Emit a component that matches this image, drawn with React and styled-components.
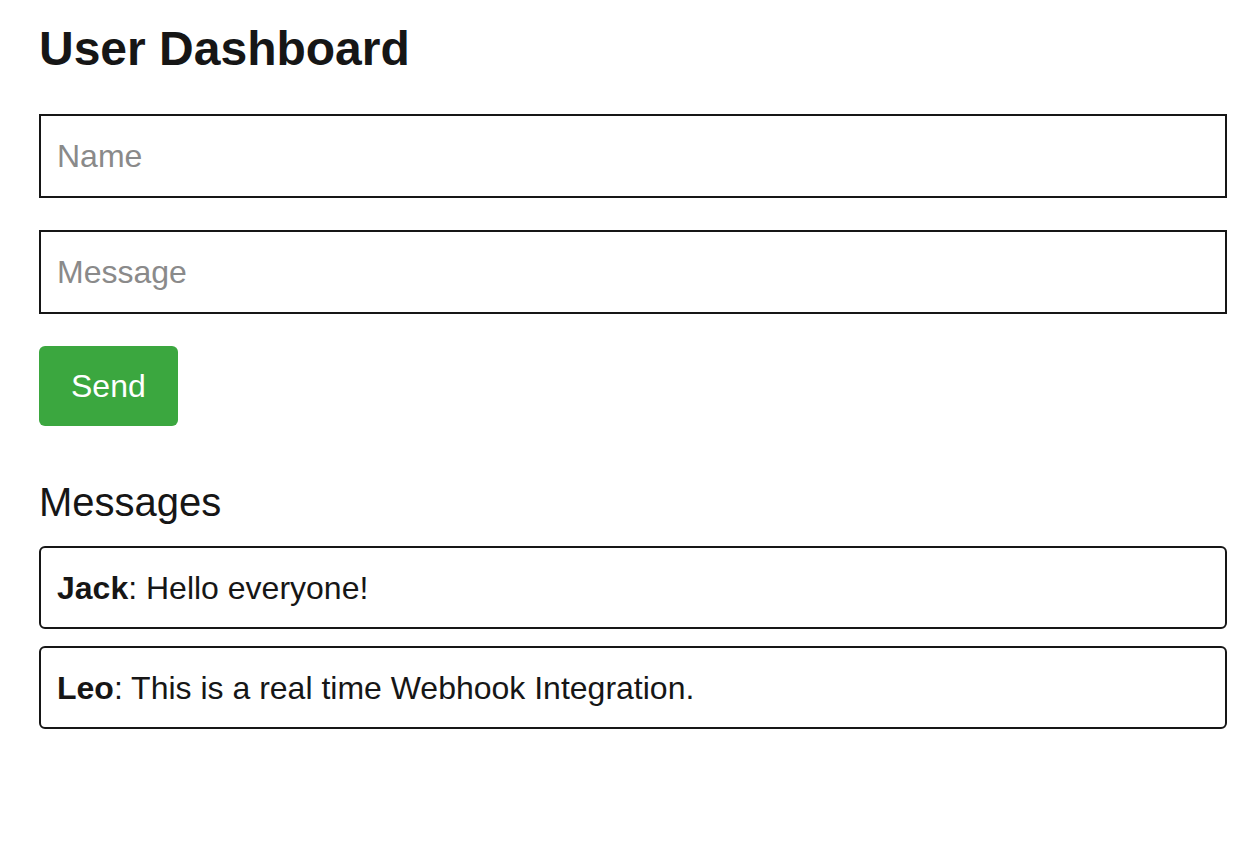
import React from "react";
import styled, { createGlobalStyle } from "styled-components";

const GlobalStyle = createGlobalStyle`
  body {
    margin: 0;
    background: #ffffff;
    font-family: "Liberation Sans", Arial, sans-serif;
    color: #161616;
  }
`;

const Page = styled.div`
  padding: 21px 28px 40px 39px;
`;

const Title = styled.h1`
  margin: 0 0 37px;
  font-size: 48px;
  line-height: 56px;
  font-weight: 700;
`;

const Form = styled.form`
  display: flex;
  flex-direction: column;
  align-items: flex-start;
  gap: 32px;
`;

const Field = styled.input`
  box-sizing: border-box;
  width: 1188px;
  height: 84px;
  padding: 0 16px;
  border: 2px solid #161616;
  border-radius: 0;
  font-family: inherit;
  font-size: 32px;
  color: #161616;
  outline: none;
  &::placeholder {
    color: #8a8a8a;
  }
`;

const SendButton = styled.button`
  height: 80px;
  padding: 0 32px;
  border: none;
  border-radius: 6px;
  background: #3ba73f;
  color: #ffffff;
  font-family: inherit;
  font-size: 32px;
  cursor: pointer;
`;

const Subtitle = styled.h2`
  margin: 53px 0 21px;
  font-size: 40px;
  line-height: 46px;
  font-weight: 400;
`;

const List = styled.div`
  display: flex;
  flex-direction: column;
  gap: 17px;
`;

const Card = styled.div`
  box-sizing: border-box;
  width: 1188px;
  height: 83px;
  display: flex;
  align-items: center;
  padding: 1px 16px 0;
  border: 2px solid #161616;
  border-radius: 6px;
  font-size: 32px;
  b {
    font-weight: 700;
  }
`;

const messages = [
  { user: "Jack", text: "Hello everyone!" },
  { user: "Leo", text: "This is a real time Webhook Integration." },
];

export default function App() {
  return (
    <Page>
      <GlobalStyle />
      <Title>User Dashboard</Title>
      <Form onSubmit={(e) => e.preventDefault()}>
        <Field type="text" placeholder="Name" />
        <Field type="text" placeholder="Message" />
        <SendButton type="submit">Send</SendButton>
      </Form>
      <Subtitle>Messages</Subtitle>
      <List>
        {messages.map((m) => (
          <Card key={m.user}>
            <span>
              <b>{m.user}</b>: {m.text}
            </span>
          </Card>
        ))}
      </List>
    </Page>
  );
}
